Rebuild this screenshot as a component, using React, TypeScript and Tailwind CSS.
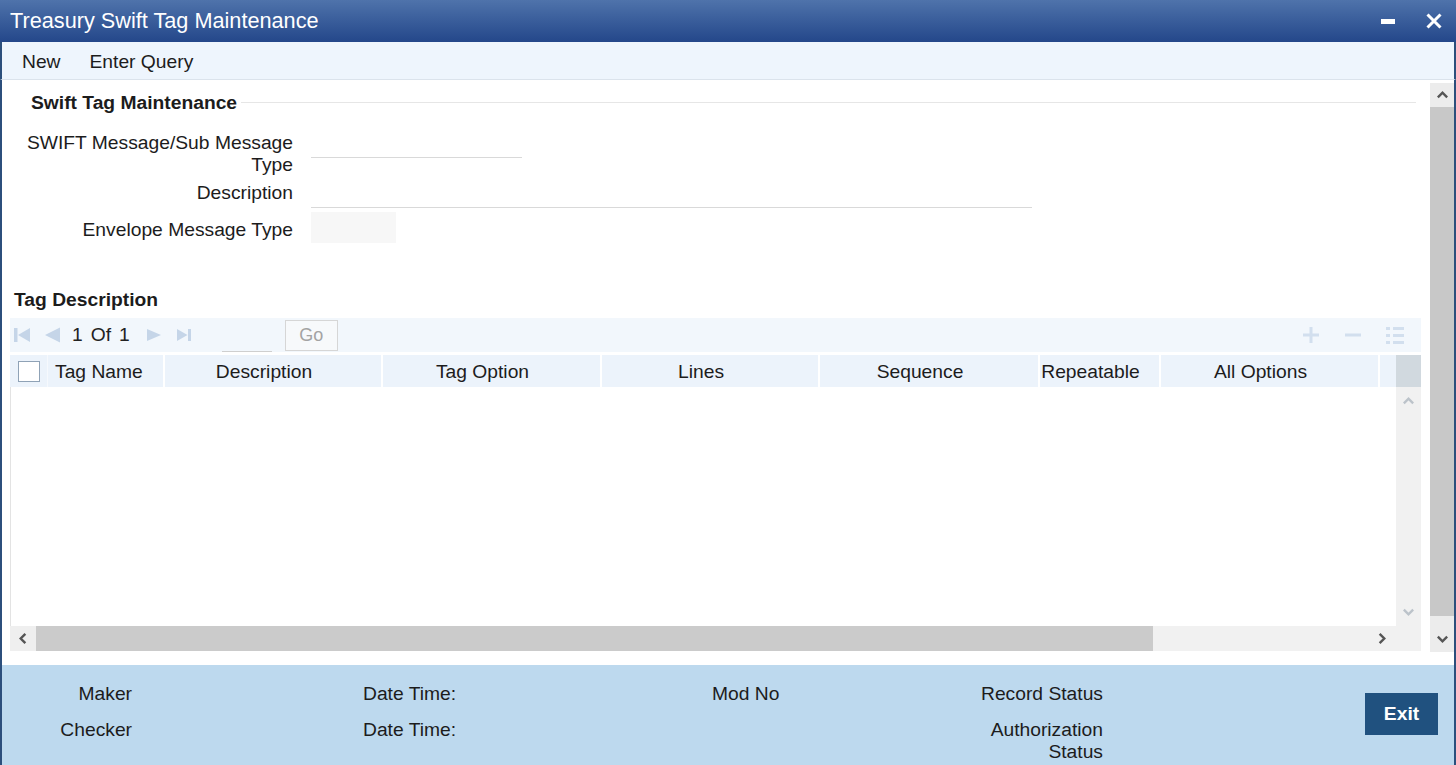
import React from 'react';

const Chevron = ({ dir, color, size = 12 }: { dir: 'up' | 'down' | 'left' | 'right'; color: string; size?: number }) => {
  const d = {
    up: 'M2 9 L7 4 L12 9',
    down: 'M2 5 L7 10 L12 5',
    left: 'M9 2 L4 7 L9 12',
    right: 'M5 2 L10 7 L5 12',
  }[dir];
  return (
    <svg width={size} height={size} viewBox="0 0 14 14">
      <path d={d} fill="none" stroke={color} strokeWidth="2.6" />
    </svg>
  );
};

const pagerColor = '#c5d5e8';
const toolColor = '#d2dfee';

const columns = [
  { label: 'Description', w: 'w-[218px]' },
  { label: 'Tag Option', w: 'w-[219px]' },
  { label: 'Lines', w: 'w-[218px]' },
  { label: 'Sequence', w: 'w-[220px]' },
  { label: 'Repeatable', w: 'w-[121px]' },
  { label: 'All Options', w: 'w-[219px]' },
];

export default function App() {
  return (
    <div className="w-[1456px] h-[765px] overflow-hidden flex flex-col bg-white text-[19.25px] text-[#1c1c1c] font-['Liberation_Sans',Arial,sans-serif]">
      {/* title bar */}
      <div className="h-[42px] shrink-0 flex items-center justify-between pl-[10px] pr-[14px] bg-gradient-to-b from-[#4f73ab] to-[#24478a] text-white">
        <span className="text-[21.7px] leading-none -mt-[1px]">Treasury Swift Tag Maintenance</span>
        <div className="flex items-center gap-[31px]">
          <div className="w-[14px] h-[5px] bg-white" />
          <svg width="16" height="16" viewBox="0 0 16 16">
            <path d="M1.5 1.5 L14.5 14.5 M14.5 1.5 L1.5 14.5" stroke="white" strokeWidth="3" />
          </svg>
        </div>
      </div>

      {/* menu */}
      <div className="h-[38px] shrink-0 flex items-center gap-[29px] pl-[20px] pt-[3px] bg-[#eef5fd] border-b border-[#dbe3ec] border-x-2 border-x-[#2c4f7c]">
        <span>New</span>
        <span>Enter Query</span>
      </div>

      {/* body */}
      <div className="h-[585px] shrink-0 flex border-x-2 border-[#2c4f7c]">
        <div className="flex-1 flex flex-col">
          <div className="mt-[12px] flex items-center pl-[29px] pr-[14px]">
            <span className="font-bold leading-[22px]">Swift Tag Maintenance</span>
            <div className="ml-1 flex-1 h-px bg-[#e6e6e6] -mt-[1px]" />
          </div>

          <div className="mt-[17px] flex">
            <div className="w-[291px] text-right leading-[22px] pt-[1px]">
              SWIFT Message/Sub Message
              <br />
              Type
            </div>
            <div className="ml-[18px] h-[27px] w-[211px] border-b border-[#d9d9d9]" />
          </div>

          <div className="mt-[5px] flex">
            <div className="w-[291px] text-right leading-[22px] pt-[1px]">Description</div>
            <div className="ml-[18px] h-[27px] w-[721px] border-b border-[#d9d9d9]" />
          </div>

          <div className="mt-[4px] flex items-center">
            <div className="w-[291px] text-right leading-[22px] pt-[4px]">Envelope Message Type</div>
            <div className="ml-[18px] h-[31px] w-[85px] bg-[#f7f7f7]" />
          </div>

          <div className="mt-[46px] pl-[12px] font-bold leading-[22px]">Tag Description</div>

          {/* pager toolbar */}
          <div className="mt-[7px] ml-[8px] mr-[9px] h-[34px] bg-[#f2f7fc] flex items-center pl-[4px] pr-[17px]">
            <svg width="16" height="16" viewBox="0 0 16 16">
              <rect x="0" y="1" width="3.5" height="14" fill={pagerColor} />
              <path d="M16 1 L4 8 L16 15 Z" fill={pagerColor} />
            </svg>
            <svg className="ml-[14px]" width="16" height="16" viewBox="0 0 16 16">
              <path d="M16 0.5 L1 8 L16 15.5 Z" fill={pagerColor} />
            </svg>
            <span className="ml-[12px] leading-none text-[#222] flex gap-[8px]">
              <span>1</span>
              <span>Of</span>
              <span>1</span>
            </span>
            <svg className="ml-[17px]" width="14" height="14" viewBox="0 0 14 14">
              <path d="M0 1 L14 7 L0 13 Z" fill={pagerColor} />
            </svg>
            <svg className="ml-[16px]" width="14" height="14" viewBox="0 0 14 14">
              <path d="M0 1 L10.5 7 L0 13 Z" fill={pagerColor} />
              <rect x="11" y="1" width="3" height="12" fill={pagerColor} />
            </svg>
            <div className="ml-[31px] w-[50px] h-[30px] self-end border-b border-[#cfcfcf]" />
            <div className="ml-[13px] w-[53px] h-[31px] border border-[#d6d6d6] bg-[#f7f9fb] flex items-center justify-center text-[#a3a3a3] text-[18px]">
              Go
            </div>
            <div className="flex-1" />
            <svg width="16" height="16" viewBox="0 0 16 16">
              <path d="M8 0 V16 M0 8 H16" stroke={toolColor} strokeWidth="3" />
            </svg>
            <svg className="ml-[26px]" width="16" height="16" viewBox="0 0 16 16">
              <path d="M0 8 H16" stroke={toolColor} strokeWidth="3" />
            </svg>
            <svg className="ml-[25px]" width="18" height="17" viewBox="0 0 18 17">
              <rect x="0" y="0" width="4" height="3" fill={toolColor} />
              <rect x="7" y="0" width="11" height="3" fill={toolColor} />
              <rect x="0" y="7" width="4" height="3" fill={toolColor} />
              <rect x="7" y="7" width="11" height="3" fill={toolColor} />
              <rect x="0" y="14" width="4" height="3" fill={toolColor} />
              <rect x="7" y="14" width="11" height="3" fill={toolColor} />
            </svg>
          </div>

          {/* grid */}
          <div className="mt-[3px] ml-[8px] mr-[9px] flex">
            <div className="flex-1 flex flex-col">
              <div className="h-[32px] flex bg-[#ecf3fb]">
                <div className="w-[38px] flex items-center justify-center border-r border-[#f6f9fd]">
                  <div className="w-[22px] h-[21px] bg-white border border-[#8fa2b6]" />
                </div>
                <div className="w-[115px] flex items-center pl-[7px] pt-[3px]">Tag Name</div>
                {columns.map((c) => (
                  <div key={c.label} className={`${c.w} flex items-center justify-center pr-[18px] pt-[3px] border-l-2 border-white`}>
                    {c.label}
                  </div>
                ))}
                <div className="flex-1 border-l-2 border-white" />
              </div>
              <div className="h-[239px] bg-white border-l border-[#e3e3e3]" />
              <div className="h-[25px] flex">
                <div className="w-[26px] bg-[#efefef] flex items-center justify-center">
                  <Chevron dir="left" color="#555" size={13} />
                </div>
                <div className="w-[1117px] bg-[#cbcbcb]" />
                <div className="flex-1 bg-[#f1f1f1] flex items-center justify-end pr-[8px]">
                  <Chevron dir="right" color="#555" size={13} />
                </div>
              </div>
            </div>
            <div className="w-[25px] flex flex-col bg-[#f1f1f1]">
              <div className="h-[32px] bg-[#d1d9df]" />
              <div className="h-[239px] flex flex-col items-center justify-between py-[8px]">
                <Chevron dir="up" color="#bcc3ca" size={13} />
                <Chevron dir="down" color="#bcc3ca" size={13} />
              </div>
            </div>
          </div>
        </div>

        {/* page scrollbar */}
        <div className="w-[24px] mt-[3px] h-[569px] flex flex-col">
          <div className="h-[24px] bg-[#ececec] flex items-center justify-center">
            <Chevron dir="up" color="#555" size={13} />
          </div>
          <div className="h-[509px] bg-[#c8c8c8]" />
          <div className="flex-1 bg-[#ececec] flex items-end justify-center pb-[7px]">
            <Chevron dir="down" color="#555" size={13} />
          </div>
        </div>
      </div>

      {/* footer */}
      <div className="flex-1 flex bg-[#bdd9ee] border-x-2 border-[#2c4f7c] leading-[22px]">
        <div className="w-[130px] pt-[18px] flex flex-col gap-[14px] text-right">
          <span>Maker</span>
          <span>Checker</span>
        </div>
        <div className="ml-[231px] w-[349px] pt-[18px] flex flex-col gap-[14px]">
          <span>Date Time:</span>
          <span>Date Time:</span>
        </div>
        <div className="w-[200px] pt-[18px]">
          <span>Mod No</span>
        </div>
        <div className="w-[191px] pt-[18px] flex flex-col gap-[14px] text-right">
          <span>Record Status</span>
          <span>
            Authorization
            <br />
            Status
          </span>
        </div>
        <div className="ml-auto mr-[16px] mt-[28px] w-[73px] h-[42px] bg-[#20517f] text-white font-bold flex items-center justify-center">
          Exit
        </div>
      </div>
    </div>
  );
}
